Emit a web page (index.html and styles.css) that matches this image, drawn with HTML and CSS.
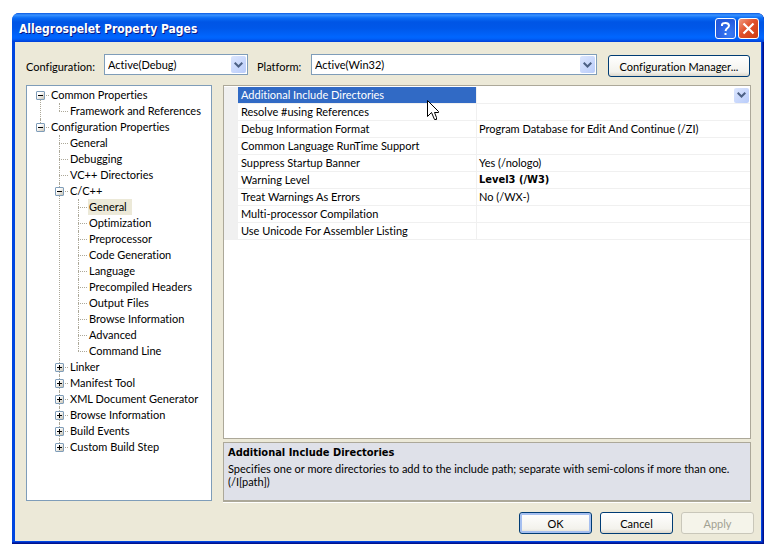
FILE: index.html
```html
<!DOCTYPE html>
<html lang="en">
<head>
    <meta charset="UTF-8">
    <meta name="viewport" content="width=device-width, initial-scale=1.0">
    <title>Allegrospelet Property Pages</title>
    <link rel="stylesheet" href="styles.css">
</head>
<body>
    <div class="window">
        <header class="titlebar">
            <h1>Allegrospelet Property Pages</h1>
            <button class="title-btn help" aria-label="Help">
                <svg width="21" height="21" viewBox="0 0 21 21"><path d="M7 8V6.500Q7.500 5 10.500 5T14 7.500Q14 9 12.500 10T10.500 13M10.500 15V17" fill="none" stroke="#fff" stroke-width="2"/></svg>
            </button>
            <button class="title-btn close" aria-label="Close">
                <svg width="21" height="21" viewBox="0 0 21 21"><path d="M5.500 5.500L15.500 15.500M15.500 5.500L5.500 15.500" fill="none" stroke="#fff" stroke-width="2.200"/></svg>
            </button>
        </header>

        <main class="content">
            <div class="toolbar">
                <label class="config-label" for="config">Configuration:</label>
                <div class="combo config">
                    <select id="config"><option>Active(Debug)</option></select>
                    <span class="arrow"><svg width="9" height="6" viewBox="0 0 9 6"><path d="M0.700 0.700L4.500 4.500L8.300 0.700" fill="none" stroke="#4d6185" stroke-width="2"/></svg></span>
                </div>
                <label class="platform-label" for="platform">Platform:</label>
                <div class="combo platform">
                    <select id="platform"><option>Active(Win32)</option></select>
                    <span class="arrow"><svg width="9" height="6" viewBox="0 0 9 6"><path d="M0.700 0.700L4.500 4.500L8.300 0.700" fill="none" stroke="#4d6185" stroke-width="2"/></svg></span>
                </div>
                <button class="btn manager">Configuration Manager...</button>
            </div>

            <div class="panes">
                <nav class="tree">
                    <ul>
                        <li><button class="toggle minus" aria-label="Collapse"></button><span>Common Properties</span>
                            <ul>
                                <li><span>Framework and References</span></li>
                            </ul>
                        </li>
                        <li><button class="toggle minus" aria-label="Collapse"></button><span>Configuration Properties</span>
                            <ul>
                                <li><span>General</span></li>
                                <li><span>Debugging</span></li>
                                <li><span>VC++ Directories</span></li>
                                <li><button class="toggle minus" aria-label="Collapse"></button><span>C/C++</span>
                                    <ul>
                                        <li><span class="selected">General</span></li>
                                        <li><span>Optimization</span></li>
                                        <li><span>Preprocessor</span></li>
                                        <li><span>Code Generation</span></li>
                                        <li><span>Language</span></li>
                                        <li><span>Precompiled Headers</span></li>
                                        <li><span>Output Files</span></li>
                                        <li><span>Browse Information</span></li>
                                        <li><span>Advanced</span></li>
                                        <li><span>Command Line</span></li>
                                    </ul>
                                </li>
                                <li><button class="toggle plus" aria-label="Expand"></button><span>Linker</span></li>
                                <li><button class="toggle plus" aria-label="Expand"></button><span>Manifest Tool</span></li>
                                <li><button class="toggle plus" aria-label="Expand"></button><span>XML Document Generator</span></li>
                                <li><button class="toggle plus" aria-label="Expand"></button><span>Browse Information</span></li>
                                <li><button class="toggle plus" aria-label="Expand"></button><span>Build Events</span></li>
                                <li><button class="toggle plus" aria-label="Expand"></button><span>Custom Build Step</span></li>
                            </ul>
                        </li>
                    </ul>
                </nav>

                <section class="properties">
                    <div class="grid">
                        <table>
                            <tr class="active">
                                <th scope="row">Additional Include Directories
                                    <svg class="cursor" width="12" height="21" viewBox="0 0 12 21"><path d="M0.500 0.500V16.500L4.500 12.500L7.500 19.500H9.500V17.500L7.500 12.500H11.500V11.500Z" fill="#fff" stroke="#000"/></svg>
                                </th>
                                <td><button class="arrow" aria-label="Edit value"><svg width="9" height="6" viewBox="0 0 9 6"><path d="M0.700 0.700L4.500 4.500L8.300 0.700" fill="none" stroke="#4d6185" stroke-width="2"/></svg></button></td>
                            </tr>
                            <tr><th scope="row">Resolve #using References</th><td></td></tr>
                            <tr><th scope="row">Debug Information Format</th><td>Program Database for Edit And Continue (/ZI)</td></tr>
                            <tr><th scope="row">Common Language RunTime Support</th><td></td></tr>
                            <tr><th scope="row">Suppress Startup Banner</th><td>Yes (/nologo)</td></tr>
                            <tr><th scope="row">Warning Level</th><td class="changed">Level3 (/W3)</td></tr>
                            <tr><th scope="row">Treat Warnings As Errors</th><td>No (/WX-)</td></tr>
                            <tr><th scope="row">Multi-processor Compilation</th><td></td></tr>
                            <tr><th scope="row">Use Unicode For Assembler Listing</th><td></td></tr>
                        </table>
                    </div>
                    <div class="description">
                        <h2>Additional Include Directories</h2>
                        <p>Specifies one or more directories to add to the include path; separate with semi-colons if more than one. (/I[path])</p>
                    </div>
                </section>
            </div>

            <footer class="actions">
                <button class="btn default">OK</button>
                <button class="btn">Cancel</button>
                <button class="btn" disabled>Apply</button>
            </footer>
        </main>
    </div>
</body>
</html>
```
FILE: styles.css
```css
* { box-sizing: border-box; }
body { font: 11px/13px Tahoma, Lato, sans-serif; font-variant-ligatures: none; color: #000; background: #fff; margin: 0; padding: 13px 13px 13px 12px; min-height: 100vh; display: flex; }
button, select { font: inherit; font-variant-ligatures: none; color: inherit; margin: 0; padding: 0; }
ul { list-style: none; margin: 0; padding: 0; }

.window { flex: 1; min-width: 0; display: flex; flex-direction: column; background: #0046e0; border-radius: 7px 7px 0 0; overflow: hidden; box-shadow: inset -1px -1px #00138c, inset -2px -2px #0024b4; }
.titlebar { display: flex; align-items: center; gap: 2px; height: 29px; padding: 2px 5px 0 7px; background: linear-gradient(#0a58e0, #3a93ff 2px, #0a6cf5 5px, #0055e5 9px, #0057e8 15px, #0066ff 24px, #0060f8 26px, #003dd7); }
h1 { flex: 1; margin: 0; font: bold 12px/18px 'DejaVu Sans Condensed', sans-serif; color: #fff; text-shadow: 1px 1px #0a1883; }
.title-btn { display: block; width: 21px; height: 21px; border: 1px solid #fff; border-radius: 3px; background: radial-gradient(circle at 70% 80%, #3a7cf5, #2459dd 70%); }
.title-btn svg { display: block; margin: -1px; }
.title-btn.close { background: linear-gradient(135deg, #f09a80, #e1512c 45%, #cc3c12); }

.content { flex: 1; display: flex; flex-direction: column; margin: 0 3px 3px; padding: 12px 10px 7px 11px; background: #ece9d8; }

.toolbar { display: flex; height: 31px; }
.toolbar label { padding-top: 6px; }
.config-label { width: 78px; }
.platform-label { width: 54px; margin-left: 9px; }
.combo { position: relative; height: 21px; }
.combo.config { width: 144px; }
.combo.platform { flex: 1; }
.combo select { display: block; width: 100%; height: 21px; padding: 0 20px 0 3px; border: 1px solid #7f9db9; border-radius: 0; background: #fff; appearance: none; }
.arrow { display: flex; align-items: center; justify-content: center; width: 15px; border: 0; border-radius: 2px; background: linear-gradient(135deg, #dce6fe, #b9ccfa); }
.combo .arrow { position: absolute; top: 2px; right: 2px; bottom: 2px; pointer-events: none; }

.btn { width: 73px; height: 22px; border: 1px solid #003c74; border-radius: 3px; background: linear-gradient(#fff, #f3f2ec 80%, #dcd7cb); }
.btn.manager { width: 142px; margin: 1px 1px 0 11px; }
.btn.default { box-shadow: inset 0 0 0 2px #a5bff0; }
.btn:disabled { border-color: #c9c7ba; background: #f5f4ea; color: #a1a192; }

.panes { flex: 1; display: flex; gap: 11px; }
.tree { width: 186px; padding: 1px 0 0 9px; border: 1px solid #7f9db9; background: #fff; }
.tree li { position: relative; padding-left: 15px; }
.tree ul ul { margin-left: 4px; }
.tree span { display: block; width: fit-content; height: 16px; line-height: 16px; }
.tree .selected { background: #ece9d8; margin-left: -1px; padding: 0 5px 0 1px; }

/* dotted connector lines */
.tree li::before { content: ""; position: absolute; top: 0; bottom: 0; left: 4px; border-left: 1px dotted #aca899; }
.tree li::after { content: ""; position: absolute; top: 8px; left: 4px; width: 9px; border-top: 1px dotted #aca899; }
.tree > ul > li:first-child::before { top: 8px; }
.tree li:last-child::before { bottom: auto; height: 8px; }
.toggle { position: absolute; z-index: 1; top: 4px; left: 0; width: 9px; height: 9px; border: 1px solid #7f9db9; border-radius: 1px; background: linear-gradient(135deg, #fff 30%, #c9c3b4); }
.toggle::before, .toggle.plus::after { content: ""; position: absolute; top: 3px; left: 1px; width: 5px; height: 1px; background: #000; }
.toggle.plus::after { top: 1px; left: 3px; width: 1px; height: 5px; }

.properties { flex: 1; min-width: 0; margin-bottom: -1px; display: flex; flex-direction: column; }
.grid { flex: 1; padding-top: 1px; border: 1px solid #aca899; background: #fff; }
table { width: 100%; border-collapse: separate; border-spacing: 0; table-layout: fixed; }
th, td { height: 17px; padding: 0 2px; border-bottom: 1px solid #f0f0f0; font-weight: normal; text-align: left; line-height: 16px; white-space: nowrap; }
th { position: relative; width: 253px; padding-left: 3px; border-left: 14px solid #f0f0f0; border-right: 1px solid #f0f0f0; }
td { padding-right: 1px; }
.active th { background: #316ac5; background-clip: padding-box; color: #fff; }
.active .arrow { height: 15px; margin-left: auto; }
.changed { font-family: Tahoma, 'DejaVu Sans Condensed', sans-serif; font-weight: bold; }
.cursor { position: absolute; z-index: 2; top: 13px; left: 189px; }
.description { min-height: 60px; margin-top: 3px; padding: 3px 4px; border: 1px solid #aca899; border-bottom-width: 2px; box-shadow: 0 1px #fff; background: #dfe1e9; }
h2 { margin: 0 0 3px; font: bold 11px/13px Tahoma, 'DejaVu Sans Condensed', sans-serif; }
p { margin: 0; }

.actions { display: flex; justify-content: flex-end; gap: 8px; padding-top: 11px; margin-right: -3px; }
```
